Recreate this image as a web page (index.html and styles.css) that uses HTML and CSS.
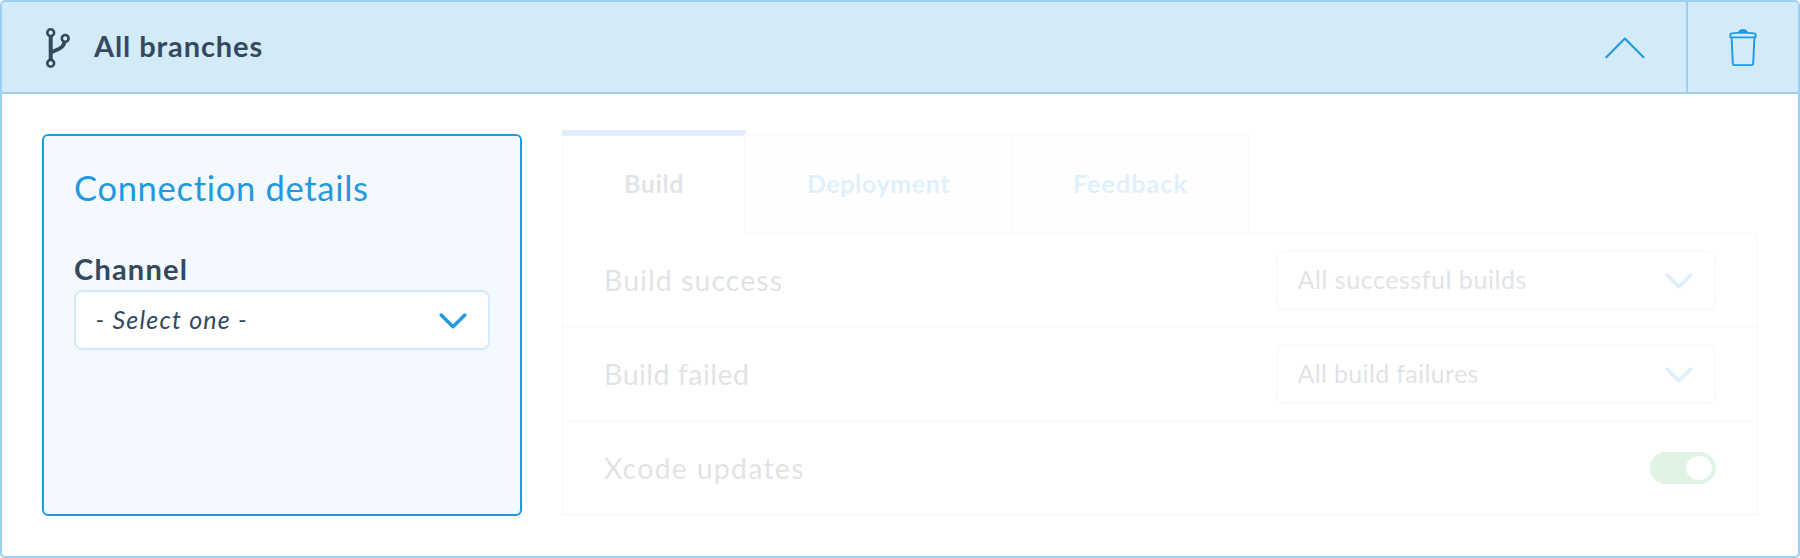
FILE: index.html
```html
<!DOCTYPE html>
<html lang="en">
<head>
<meta charset="utf-8">
<title>All branches</title>
<link rel="stylesheet" href="styles.css">
</head>
<body>
<section class="card">
  <header class="card-header">
    <svg class="branch-icon" width="26" height="42" viewBox="0 0 26 42" fill="none" stroke="#34495e">
      <path d="M5.700 9v23" stroke-width="4"/>
      <path d="M6 25.200C13 22.200 18.800 21 19.600 14.500" stroke-width="3.8"/>
      <circle cx="5.700" cy="5.700" r="3.400" stroke-width="2.6"/>
      <circle cx="20.200" cy="11.400" r="3.400" stroke-width="2.6"/>
      <circle cx="5.700" cy="36.300" r="3.400" stroke-width="2.6"/>
    </svg>
    <h1 class="card-title"><span class="t-title">All branches</span></h1>
    <button class="icon-button collapse" aria-label="Collapse">
      <svg width="42" height="24" viewBox="0 0 42 24" fill="none" stroke="#1f9ae0" stroke-width="2.1" stroke-linecap="round" stroke-linejoin="round"><path d="M2.3 21.2 20.9 2.6 39.5 21.2"/></svg>
    </button>
    <button class="icon-button remove" aria-label="Remove">
      <svg width="30" height="40" viewBox="0 0 30 40" fill="none" stroke="#1f9ae0" stroke-width="1.9" stroke-linejoin="round">
        <path d="M3.6 9.4 4.800 35.600q.1 1.500 1.600 1.500h17.200q1.500 0 1.600-1.500L26.400 9.400"/>
        <path d="M2.600 9.400q-1-4 1-4Q15 3.900 26.400 5.400q2 0 1 4Z"/>
        <path d="M10.200 4.800Q11 1.500 15 1.500T19.800 4.800Z" fill="#1f9ae0" stroke-width="1"/>
      </svg>
    </button>
  </header>
  <div class="card-body">
    <div class="details">
      <h2 class="details-title"><span class="t-details">Connection details</span></h2>
      <label class="field-label"><span class="t-channel">Channel</span></label>
      <div class="select">
        <em class="t-select">- Select one -</em>
        <svg class="caret" width="28" height="18" viewBox="0 0 28 18"><path d="M2.200 3 14 14.800 25.800 3"/></svg>
      </div>
    </div>
    <div class="events">
      <nav class="tabs">
        <a class="tab active"><span class="t-build">Build</span></a>
        <a class="tab deployment"><span class="t-deployment">Deployment</span></a>
        <a class="tab feedback"><span class="t-feedback">Feedback</span></a>
        <div class="tab-rest"></div>
      </nav>
      <div class="row">
        <span class="row-label t-success">Build success</span>
        <div class="select">
          <span class="t-allsuccess">All successful builds</span>
          <svg class="caret" width="28" height="18" viewBox="0 0 28 18"><path d="M2.200 3 14 14.800 25.800 3"/></svg>
        </div>
      </div>
      <div class="row">
        <span class="row-label t-failed">Build failed</span>
        <div class="select">
          <span class="t-allfail">All build failures</span>
          <svg class="caret" width="28" height="18" viewBox="0 0 28 18"><path d="M2.200 3 14 14.800 25.800 3"/></svg>
        </div>
      </div>
      <div class="row">
        <span class="row-label t-xcode">Xcode updates</span>
        <div class="toggle"><span class="knob"></span></div>
      </div>
    </div>
  </div>
</section>
</body>
</html>
```
FILE: styles.css
```css
* { box-sizing: border-box; }
body { margin: 0; background: #fff; color: #34495e; font-family: Lato, "Open Sans", sans-serif; font-size: 28px; }
h1, h2 { margin: 0; }
.card { height: 558px; border: 2px solid #9bd0ef; border-radius: 5px; overflow: hidden; }
.card-header { display: flex; align-items: center; height: 92px; border-bottom: 2px solid #9bd0ef; background: #d3eaf8; }
.branch-icon { margin: 2px 0 0 43px; flex: none; }
.card-title { flex: 1; margin: -2px 0 0 23px; font-size: 29px; line-height: 36px; font-weight: 700; white-space: nowrap; }
.icon-button { display: flex; align-items: center; justify-content: center; height: 90px; margin: 0; padding: 0; border: 0; background: none; }
.collapse { width: 124px; padding: 1px 0 0 2px; }
.remove { width: 112px; border-left: 2px solid #9bd0ef; padding: 2px 0 0; }
.card-body { display: flex; gap: 40px; padding: 36px 40px 40px; }
.details { width: 480px; height: 382px; margin-top: 4px; padding: 30px; border: 2px solid #1f9ae0; border-radius: 6px; background: #f3f9fe; }
.details-title { color: #1f9ae0; font-size: 34.500px; line-height: 44px; font-weight: 400; white-space: nowrap; }
.field-label { display: block; margin-top: 32px; padding-top: 9px; font-size: 29px; font-weight: 700; line-height: 36px; height: 48px; }
.select { display: flex; align-items: center; justify-content: space-between; height: 60px; padding: 0 21px 0 19.500px; border: 2px solid #d3eaf8; border-radius: 8px; background: #fff; font-size: 25px; white-space: nowrap; }
.select span, .select em { margin-bottom: 2px; }
.caret { margin-top: 2px; fill: none; stroke: #1f9ae0; stroke-width: 3.4; stroke-linecap: round; stroke-linejoin: round; }
.events { flex: 1; height: 386px; opacity: .15; }
.tabs { display: flex; align-items: flex-end; height: 104px; font-size: 25px; font-weight: 700; }
.tab { display: flex; justify-content: center; align-items: center; height: 100px; padding-bottom: 2px; border: 2px solid #d3eaf8; border-right: 0; background: #f3f9fe; color: #1f9ae0; }
.tab.active { width: 184px; height: 104px; margin-right: -2px; padding: 2px 0 0; border: 0; background: linear-gradient(#3a8ed7, #3a8ed7) 0 0 / 100% 6px no-repeat, linear-gradient(#d3eaf8, #d3eaf8) 0 0 / 2px 100% no-repeat, #fff; color: #34495e; }
.tab.deployment { width: 267px; }
.tab.feedback { width: 239px; border-right: 2px solid #d3eaf8; }
.tab-rest { flex: 1; height: 2px; background: #d3eaf8; }
.row { display: flex; align-items: center; justify-content: space-between; height: 94px; padding: 0 40px; border: 2px solid #d3eaf8; border-top: 0; }
.row .select { width: 440px; }
.row-label { font-size: 28.500px; white-space: nowrap; }
.toggle { display: flex; justify-content: flex-end; width: 66px; height: 32px; padding: 4px; border-radius: 16px; background: #35b558; }
.knob { width: 26px; height: 24px; border-radius: 13px / 12px; background: #fff; }

/* Per-label tracking */
.t-title { letter-spacing: .9px; }
.t-details { letter-spacing: .7px; }
.t-channel { letter-spacing: 1.2px; }
.t-select { letter-spacing: 1.200px; }
.t-build { letter-spacing: .6px; }
.t-deployment { letter-spacing: .6px; }
.t-feedback { letter-spacing: 1.1px; }
.t-success { letter-spacing: 1.05px; }
.t-failed { letter-spacing: .5px; }
.t-xcode { letter-spacing: 1.25px; }
.t-allsuccess { letter-spacing: .55px; }
.t-allfail { letter-spacing: .35px; }
```
